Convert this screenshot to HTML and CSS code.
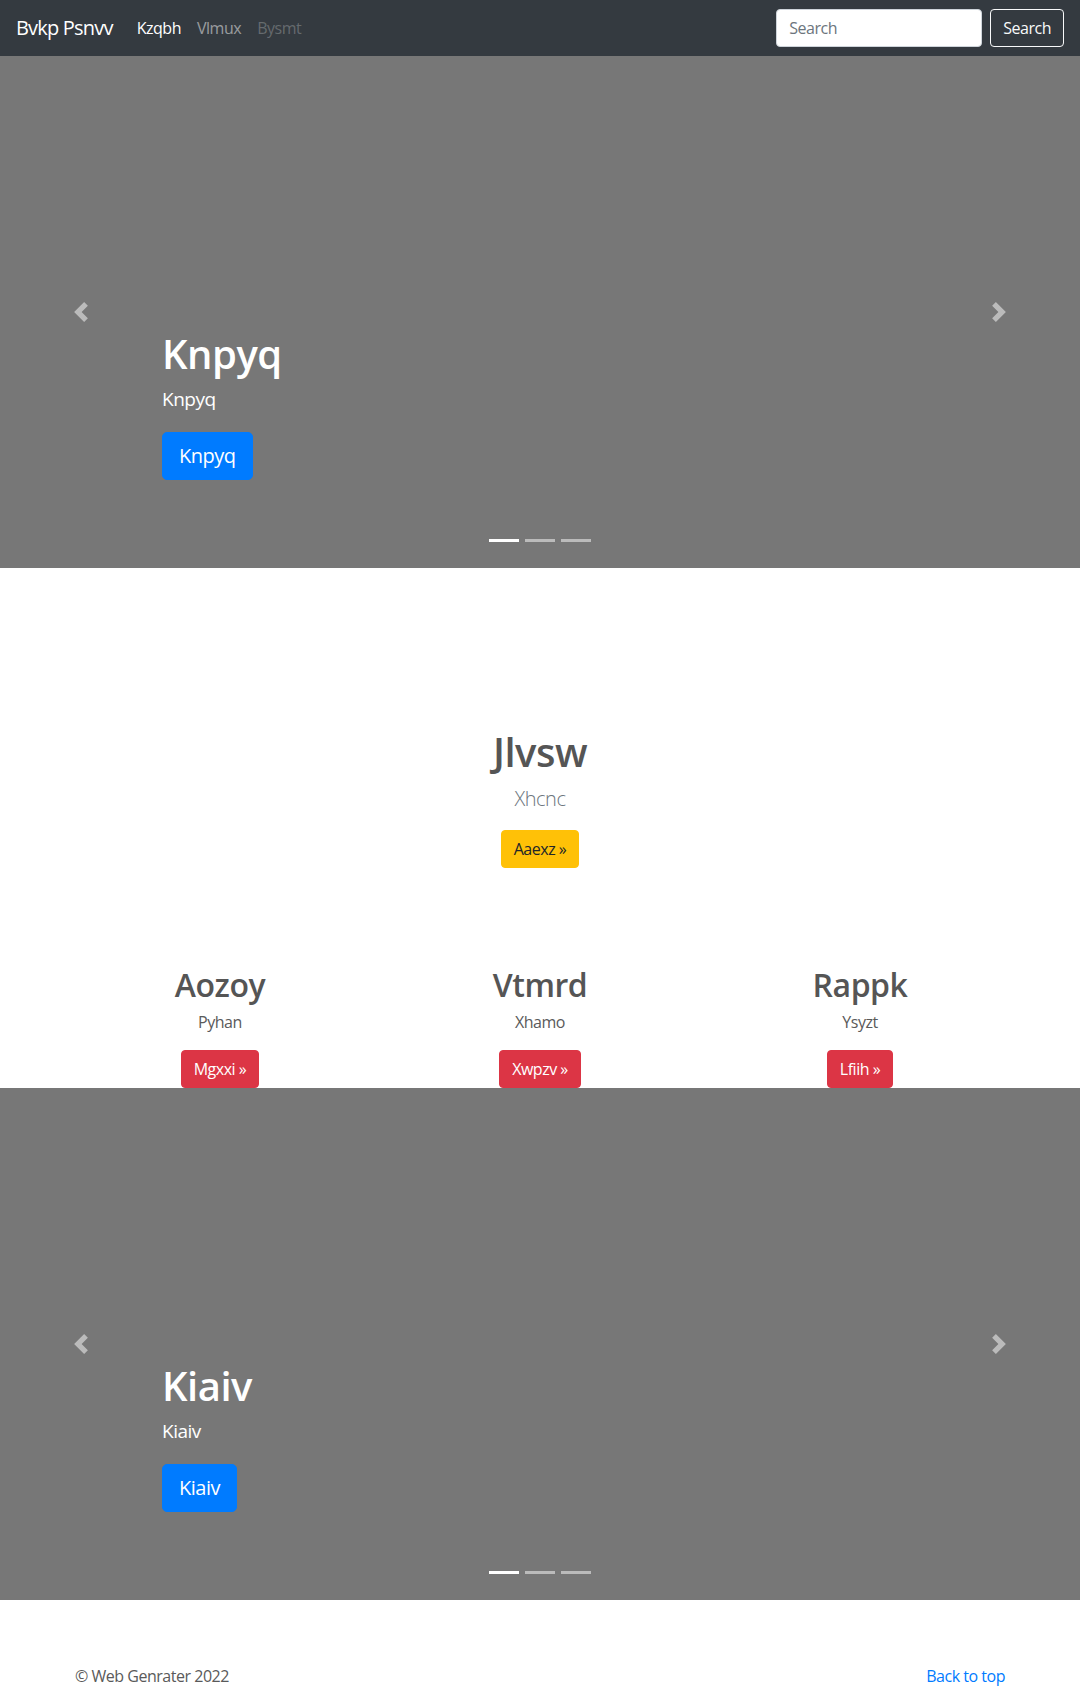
FILE: index.html
```html
<!DOCTYPE html>
<html lang="en">
<head>
<meta charset="utf-8">
<title>Bvkp Psnvv</title>
<link rel="stylesheet" href="styles.css">
</head>
<body>
<header>
  <nav class="navbar">
    <div class="nav-left">
      <a class="brand" href="#">Bvkp Psnvv</a>
      <ul class="nav-links">
        <li><a class="nav-link active" href="#">Kzqbh</a></li>
        <li><a class="nav-link" href="#">Vlmux</a></li>
        <li><a class="nav-link disabled" href="#">Bysmt</a></li>
      </ul>
    </div>
    <form class="search-form">
      <input class="search-input" type="text" placeholder="Search">
      <button class="btn btn-outline-light" type="button">Search</button>
    </form>
  </nav>
</header>

<main>
  <section class="carousel">
    <div class="carousel-item">
      <div class="carousel-caption">
        <h1 class="caption-title">Knpyq</h1>
        <p class="caption-text">Knpyq</p>
        <p class="caption-action"><a class="btn btn-lg btn-primary" href="#">Knpyq</a></p>
      </div>
    </div>
    <ol class="carousel-indicators">
      <li class="active"></li>
      <li></li>
      <li></li>
    </ol>
    <a class="carousel-control prev" href="#">
      <svg class="control-icon" viewBox="0 0 8 8" width="20" height="20"><path d="M5.25 0l-4 4 4 4 1.5-1.5L4.25 4l2.5-2.5L5.25 0z"/></svg>
    </a>
    <a class="carousel-control next" href="#">
      <svg class="control-icon" viewBox="0 0 8 8" width="20" height="20"><path d="M2.75 0l-1.5 1.5L3.75 4l-2.5 2.5L2.75 8l4-4-4-4z"/></svg>
    </a>
  </section>

  <section class="feature">
    <h1 class="feature-title">Jlvsw</h1>
    <p class="lead">Xhcnc</p>
    <p class="feature-action"><a class="btn btn-warning" href="#">Aaexz &raquo;</a></p>
  </section>

  <section class="marketing">
    <div class="col">
      <h2 class="col-title">Aozoy</h2>
      <p>Pyhan</p>
      <p class="col-action"><a class="btn btn-danger" href="#">Mgxxi &raquo;</a></p>
    </div>
    <div class="col">
      <h2 class="col-title">Vtmrd</h2>
      <p>Xhamo</p>
      <p class="col-action"><a class="btn btn-danger" href="#">Xwpzv &raquo;</a></p>
    </div>
    <div class="col">
      <h2 class="col-title">Rappk</h2>
      <p>Ysyzt</p>
      <p class="col-action"><a class="btn btn-danger" href="#">Lfiih &raquo;</a></p>
    </div>
  </section>

  <section class="carousel">
    <div class="carousel-item">
      <div class="carousel-caption">
        <h1 class="caption-title">Kiaiv</h1>
        <p class="caption-text">Kiaiv</p>
        <p class="caption-action"><a class="btn btn-lg btn-primary" href="#">Kiaiv</a></p>
      </div>
    </div>
    <ol class="carousel-indicators">
      <li class="active"></li>
      <li></li>
      <li></li>
    </ol>
    <a class="carousel-control prev" href="#">
      <svg class="control-icon" viewBox="0 0 8 8" width="20" height="20"><path d="M5.25 0l-4 4 4 4 1.5-1.5L4.25 4l2.5-2.5L5.25 0z"/></svg>
    </a>
    <a class="carousel-control next" href="#">
      <svg class="control-icon" viewBox="0 0 8 8" width="20" height="20"><path d="M2.75 0l-1.5 1.5L3.75 4l-2.5 2.5L2.75 8l4-4-4-4z"/></svg>
    </a>
  </section>
</main>

<footer class="footer">
  <p class="footer-copy">&copy; Web Genrater 2022</p>
  <p class="footer-top"><a href="#">Back to top</a></p>
</footer>
</body>
</html>
```

FILE: styles.css
```css
* { box-sizing: border-box; }

html, body {
  margin: 0;
  padding: 0;
}

body {
  font-family: "Open Sans", "Noto Sans", "Liberation Sans", sans-serif;
  font-size: 16px;
  line-height: 1.5;
  color: #5a5a5a;
  background: #fff;
  letter-spacing: -0.03em;
}

a { text-decoration: none; }

p { margin: 0 0 16px; }

h1, h2 { margin: 0 0 8px; line-height: 1.2; }

/* Navbar */
.navbar {
  height: 56px;
  background: #343a40;
  padding: 8px 16px;
  display: flex;
  align-items: center;
  justify-content: space-between;
}

.nav-left {
  display: flex;
  align-items: center;
}

.brand {
  font-size: 20px;
  line-height: 30px;
  padding: 5px 0;
  margin-right: 16px;
  color: #fff;
  letter-spacing: -0.04em;
}

.nav-links {
  display: flex;
  list-style: none;
  margin: 0;
  padding: 0;
}

.nav-link {
  display: block;
  padding: 8px;
  color: rgba(255, 255, 255, 0.5);
}

.nav-link.active { color: #fff; }
.nav-link.disabled { color: rgba(255, 255, 255, 0.25); }

.search-form {
  display: flex;
  align-items: center;
}

.search-input {
  width: 206px;
  height: 38px;
  padding: 6px 12px;
  font-family: inherit;
  font-size: 16px;
  letter-spacing: inherit;
  color: #495057;
  background: #fff;
  border: 1px solid #ced4da;
  border-radius: 4px;
  margin-right: 8px;
}

.search-input::placeholder { color: #6c757d; }

/* Buttons */
.btn {
  display: inline-block;
  font-family: inherit;
  font-size: 16px;
  line-height: 24px;
  letter-spacing: inherit;
  padding: 6px 12px;
  border: 1px solid transparent;
  border-radius: 4px;
  text-align: center;
  vertical-align: middle;
}

.btn-lg {
  font-size: 20px;
  line-height: 30px;
  padding: 8px 16px;
  border-radius: 5px;
}

.btn-outline-light {
  color: #f8f9fa;
  border-color: #f8f9fa;
  background: transparent;
}

.btn-primary { color: #fff; background: #007bff; border-color: #007bff; }
.btn-warning { color: #212529; background: #ffc107; border-color: #ffc107; }
.btn-danger { color: #fff; background: #dc3545; border-color: #dc3545; }

/* Carousel */
.carousel {
  position: relative;
  margin-bottom: 64px;
}

.carousel-item {
  height: 512px;
  background: #777;
}

.carousel-caption {
  position: absolute;
  left: 15%;
  right: 15%;
  bottom: 48px;
  padding: 20px 0 24px;
  color: #fff;
  z-index: 10;
}

.caption-title {
  font-size: 40px;
  font-weight: 600;
  color: #fff;
  margin-bottom: 7px;
}

.caption-text {
  font-size: 19px;
  line-height: 29px;
  margin-bottom: 18px;
}

.carousel-indicators {
  position: absolute;
  left: 15%;
  right: 15%;
  bottom: 0;
  margin: 0 0 16px;
  padding: 0;
  list-style: none;
  display: flex;
  justify-content: center;
  z-index: 15;
}

.carousel-indicators li {
  width: 30px;
  height: 23px;
  margin: 0 3px;
  border-top: 10px solid transparent;
  border-bottom: 10px solid transparent;
  background-color: #fff;
  background-clip: padding-box;
  opacity: 0.5;
}

.carousel-indicators li.active { opacity: 1; }

.carousel-control {
  position: absolute;
  top: 0;
  bottom: 0;
  width: 15%;
  display: flex;
  align-items: center;
  justify-content: center;
  opacity: 0.5;
}

.carousel-control.prev { left: 0; }
.carousel-control.next { right: 0; }

.control-icon { fill: #fff; display: block; }

/* Feature */
.feature {
  text-align: center;
  padding-top: 96px;
}

.feature-title {
  font-size: 40px;
  font-weight: 600;
  color: #555;
}

.lead {
  font-size: 20px;
  line-height: 30px;
  font-weight: 300;
  color: #6c757d;
}

/* Marketing */
.marketing {
  width: 960px;
  margin: 0 auto;
  padding-top: 82px;
  display: grid;
  grid-template-columns: repeat(3, 1fr);
  text-align: center;
}

.col { padding: 0 15px; }

.col-title {
  font-size: 32px;
  font-weight: 600;
  color: #555;
  margin-bottom: 6px;
}

.col-action { margin-bottom: 0; }

/* Footer */
.footer {
  width: 960px;
  margin: 0 auto;
  padding: 0 15px;
  display: flex;
  justify-content: space-between;
}

.footer-top a { color: #007bff; }
```
